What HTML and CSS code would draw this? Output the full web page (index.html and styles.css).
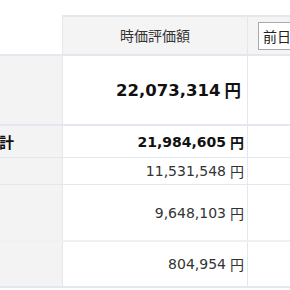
FILE: index.html
```html
<!DOCTYPE html>
<html lang="ja">
<head>
<meta charset="utf-8">
<link rel="stylesheet" href="styles.css">
</head>
<body>
<div class="table">
  <div class="row head">
    <div class="cell label corner"></div>
    <div class="cell val th">時価評価額</div>
    <div class="cell extra th"><span class="select">前日比</span></div>
  </div>
  <div class="row r1">
    <div class="cell label"></div>
    <div class="cell val big">22,073,314 <span class="yen">円</span></div>
    <div class="cell extra"></div>
  </div>
  <div class="row r2">
    <div class="cell label sum">合計</div>
    <div class="cell val bold">21,984,605 <span class="yen">円</span></div>
    <div class="cell extra"></div>
  </div>
  <div class="row r3">
    <div class="cell label"></div>
    <div class="cell val">11,531,548 <span class="yen">円</span></div>
    <div class="cell extra"></div>
  </div>
  <div class="row r4">
    <div class="cell label"></div>
    <div class="cell val">9,648,103 <span class="yen">円</span></div>
    <div class="cell extra"></div>
  </div>
  <div class="row r5">
    <div class="cell label"></div>
    <div class="cell val">804,954 <span class="yen">円</span></div>
    <div class="cell extra"></div>
  </div>
</div>
</body>
</html>
```
FILE: styles.css
```css
html, body {
  margin: 0;
  padding: 0;
  background: #fff;
  overflow: hidden;
}
body {
  font-family: "DejaVu Sans", "Noto Sans CJK JP", sans-serif;
  color: #333;
}
.table {
  padding-top: 15px;
  width: 290px;
}
.row {
  display: flex;
  border-bottom: 1px solid #e2e8ed;
}
.cell {
  display: flex;
  align-items: center;
  box-sizing: border-box;
  overflow: hidden;
  white-space: nowrap;
}
.label {
  width: 63px;
  background: #f3f3f3;
  border-right: 1px solid #e2e8ed;
}
.val {
  width: 185px;
  justify-content: flex-end;
  padding-right: 3px;
  border-right: 1px solid #e2e8ed;
  font-size: 14px;
}
.extra {
  flex: 1;
}
.head {
  height: 39px;
  border-bottom: 2px solid #e2e8ed;
}
.head .corner {
  background: #fff;
  border-right: 1px solid #e2e8ed;
}
.th {
  background: #f4f4f4;
  border-top: 2px solid #e2e8ed;
  font-family: "Noto Sans CJK JP", sans-serif;
  font-size: 14px;
  color: #333;
}
.head .val {
  justify-content: center;
  padding-right: 0;
  padding-bottom: 2px;
}
.head .extra {
  padding-left: 10px;
}
.select {
  display: block;
  height: 28px;
  line-height: 27px;
  padding-left: 4px;
  width: 60px;
  background: #fff;
  border: 1px solid #a9a9a9;
  box-sizing: border-box;
  font-size: 14px;
  color: #222;
}
.r1 { height: 68px; border-bottom-width: 2px; }
.r2 { height: 31px; }
.r3 { height: 26px; }
.r4 { height: 55px; border-bottom: 2px solid #eef1f4; }
.r5 { height: 44px; border-bottom-width: 2px; }
.big {
  font-size: 16.5px;
  font-weight: bold;
  color: #111;
  padding-right: 6px;
}
.bold {
  font-weight: bold;
  color: #111;
  font-size: 14px;
}
.yen {
  font-family: "Noto Sans CJK JP", sans-serif;
  margin-left: 4px;
}
.sum {
  font-family: "Noto Sans CJK JP", sans-serif;
  font-weight: bold;
  font-size: 15px;
  color: #111;
  text-indent: -16px;
}
```
